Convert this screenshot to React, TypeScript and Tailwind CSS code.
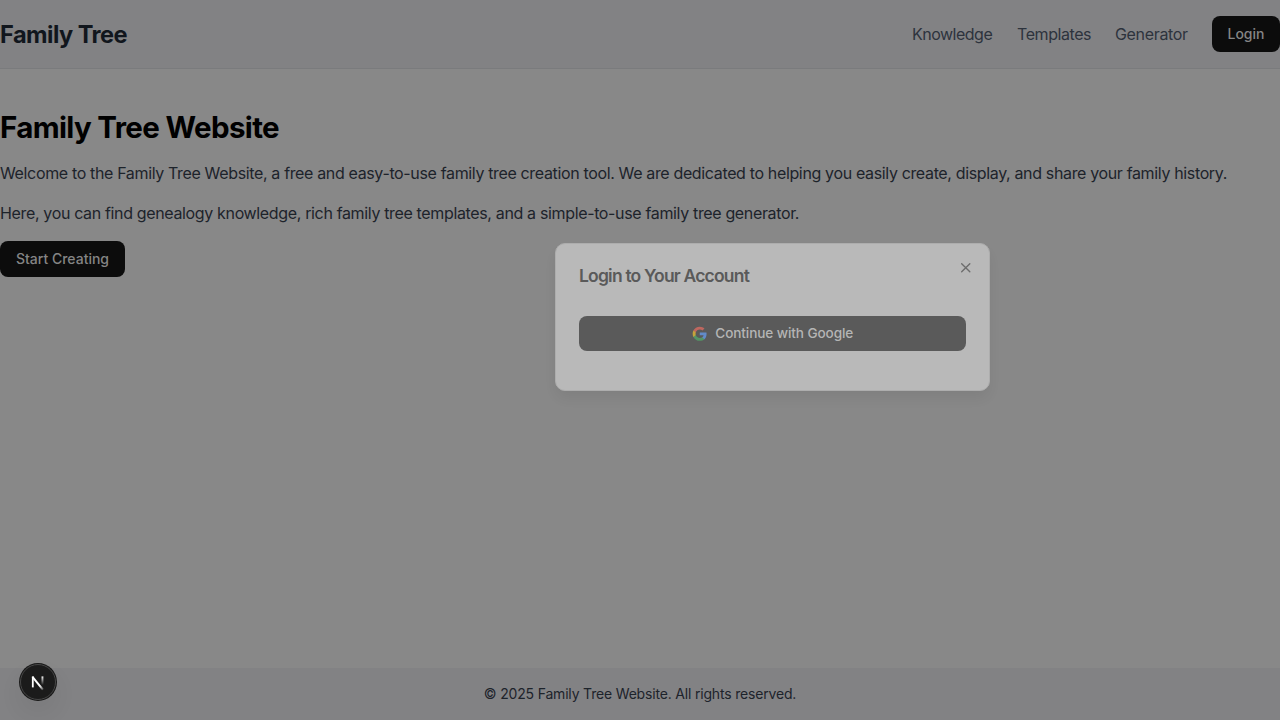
import React from "react";

function Header() {
  return (
    <header className="flex h-[69px] items-center justify-between border-b border-[#7a7b7d] bg-[#828284]">
      <div className="pt-0.5 text-[23.6px] leading-8 font-bold tracking-[-0.55px] text-[#11161d]">Family Tree</div>
      <nav className="flex items-center gap-6 text-base text-[#2d333d]">
        <a className="w-[81px] whitespace-nowrap tracking-[-0.5px]">Knowledge</a>
        <a className="w-[74px] whitespace-nowrap tracking-[-0.42px]">Templates</a>
        <a className="w-[73px] whitespace-nowrap tracking-[-0.33px]">Generator</a>
        <button className="h-9 w-[68px] rounded-lg bg-[#0c0c0c] text-sm font-medium text-[#858585]">Login</button>
      </nav>
    </header>
  );
}

function GoogleIcon() {
  return (
    <svg className="size-[15.5px]" viewBox="0 0 24 24">
      <path fill="#628bc9" d="M22.56 12.25c0-.78-.07-1.53-.2-2.25H12v4.26h5.92c-.26 1.37-1.04 2.53-2.21 3.31v2.77h3.57c2.08-1.92 3.28-4.74 3.28-8.09z" />
      <path fill="#549466" d="M12 23c2.97 0 5.46-.98 7.28-2.66l-3.57-2.77c-.98.66-2.23 1.06-3.71 1.06-2.86 0-5.29-1.93-6.16-4.53H2.18v2.84C3.99 20.53 7.7 23 12 23z" />
      <path fill="#c5a33c" d="M5.84 14.09c-.22-.66-.35-1.36-.35-2.09s.13-1.43.35-2.09V7.07H2.18C1.43 8.55 1 10.22 1 12s.43 3.45 1.18 4.93l3.66-2.84z" />
      <path fill="#bf675f" d="M12 5.38c1.62 0 3.06.56 4.21 1.64l3.15-3.15C17.45 2.09 14.97 1 12 1 7.7 1 3.99 3.47 2.18 7.07l3.66 2.84c.87-2.6 3.3-4.53 6.16-4.53z" />
    </svg>
  );
}

function LoginDialog() {
  return (
    <div
      role="dialog"
      className="absolute left-[555px] top-[243px] flex h-[148px] w-[435px] flex-col rounded-[10px] border border-[#adadad] bg-[#b9b9b9] px-[23px] pt-[22px] shadow-[0_8px_14px_-2px_rgba(0,0,0,0.07)]"
    >
      <h2 className="text-[17.5px] leading-[20px] font-semibold tracking-[-0.8px] text-[#5a5a5a]">Login to Your Account</h2>
      <button className="mt-[30px] flex h-[35px] items-center justify-center gap-2 rounded-lg bg-[#5a5a5a] text-[13.6px] font-medium text-[#b5b5b5]">
        <GoogleIcon />
        <span className="tracking-[-0.1px]">Continue with Google</span>
      </button>
      <button aria-label="Close" className="absolute right-[16px] top-[16px] text-[#6c6c6c]">
        <svg className="size-[15.5px]" viewBox="0 0 24 24" fill="none" stroke="currentColor" strokeWidth="2.1" strokeLinecap="round">
          <path d="M18.3 5.7 5.7 18.3M5.7 5.7l12.6 12.6" />
        </svg>
      </button>
    </div>
  );
}

function DevBadge() {
  return (
    <div className="absolute left-[19px] top-[663px] size-[38px] rounded-full shadow-[0_12px_24px_rgba(0,0,0,0.06)]">
      <svg className="size-full" viewBox="0 0 38 38" fill="none">
        <defs>
          <linearGradient id="stem" x1="0" y1="13" x2="0" y2="22" gradientUnits="userSpaceOnUse">
            <stop offset="0" stopColor="#fff" />
            <stop offset="1" stopColor="#fff" stopOpacity="0" />
          </linearGradient>
          <linearGradient id="slash" x1="14" y1="14" x2="25" y2="27" gradientUnits="userSpaceOnUse">
            <stop offset="0.65" stopColor="#fff" />
            <stop offset="1" stopColor="#fff" stopOpacity="0.1" />
          </linearGradient>
        </defs>
        <circle cx="19" cy="19" r="19" fill="#171717" />
        <circle cx="19" cy="19" r="17.5" fill="#1b1b1b" stroke="#474747" />
        <path d="M13.8 24.4V13.4" stroke="#fff" strokeWidth="1.8" />
        <path d="M13.5 13.8 23.9 26.6" stroke="url(#slash)" strokeWidth="2" />
        <path d="M22.5 13.4h1.9v9h-1.9z" fill="url(#stem)" />
      </svg>
    </div>
  );
}

export default function App() {
  return (
    <div className="relative flex h-[720px] w-[1280px] flex-col overflow-hidden bg-[#888888] font-['Inter',sans-serif]">
      <Header />
      <main className="flex-1 pt-10">
        <h1 className="pt-px text-[29.5px] leading-[35px] font-bold tracking-[-0.65px] text-black">Family Tree Website</h1>
        <p className="mt-4 whitespace-nowrap text-base tracking-[-0.353px] text-[#1d232b]">
          Welcome to the Family Tree Website, a free and easy-to-use family tree creation tool. We are dedicated to helping you easily create, display, and share your family history.
        </p>
        <p className="mt-4 whitespace-nowrap text-base tracking-[-0.35px] text-[#1d232b]">
          Here, you can find genealogy knowledge, rich family tree templates, and a simple-to-use family tree generator.
        </p>
        <button className="mt-4 h-9 w-[125px] rounded-lg bg-[#0c0c0c] text-sm font-medium text-[#858585]">Start Creating</button>
      </main>
      <footer className="flex h-[52px] items-center justify-center bg-[#828284] text-sm tracking-[-0.18px] text-[#1d232b]">
        <p>© 2025 Family Tree Website. All rights reserved.</p>
      </footer>
      <LoginDialog />
      <DevBadge />
    </div>
  );
}
